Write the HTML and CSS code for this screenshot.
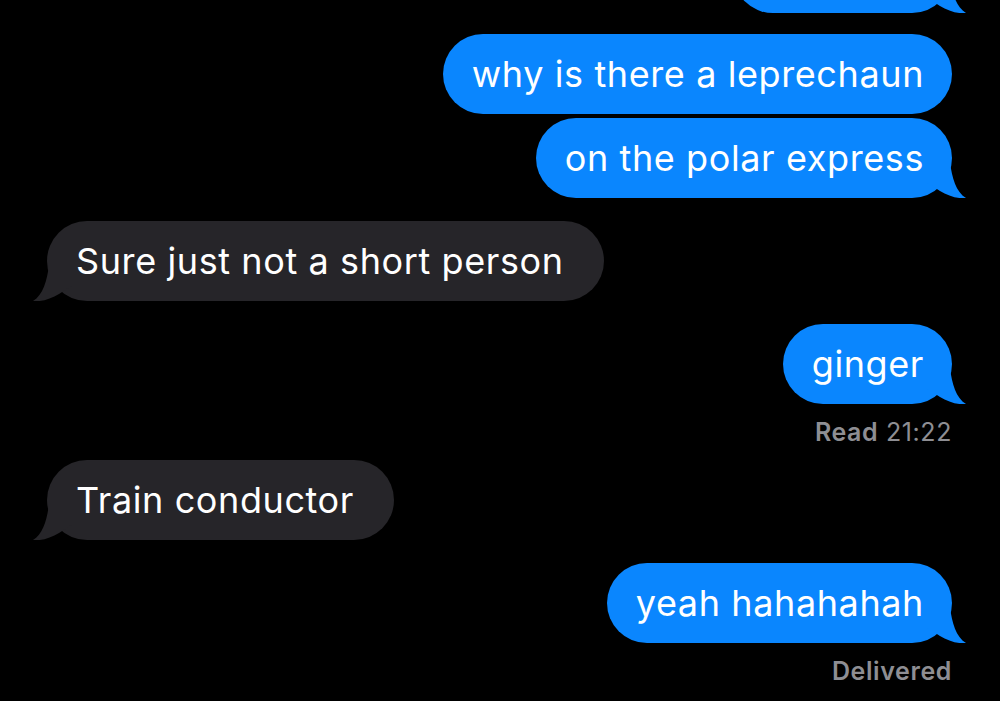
FILE: index.html
```html
<!DOCTYPE html>
<html lang="en">
<head>
    <meta charset="UTF-8">
    <meta name="viewport" content="width=device-width, initial-scale=1.0">
    <title>Messages</title>
    <link rel="stylesheet" href="styles.css">
</head>
<body>
    <main class="thread">
        <div class="group sent first">
            <div class="bubble tail clipped">
                <svg class="tail-shape" viewBox="0 0 40 36"><path d="M24 0 C26 16 30 30 40 36 C32 37 22 34 14 29 L0 20 L0 0 Z"/></svg>
            </div>
        </div>

        <div class="group sent">
            <div class="bubble">why is there a leprechaun</div>
            <div class="bubble tail">on the polar express
                <svg class="tail-shape" viewBox="0 0 40 36"><path d="M24 0 C26 16 30 30 40 36 C32 37 22 34 14 29 L0 20 L0 0 Z"/></svg>
            </div>
        </div>

        <div class="group received">
            <div class="bubble tail">Sure just not a short person
                <svg class="tail-shape" viewBox="0 0 40 36"><path d="M24 0 C26 16 30 30 40 36 C32 37 22 34 14 29 L0 20 L0 0 Z"/></svg>
            </div>
        </div>

        <div class="group sent with-status">
            <div class="bubble tail">ginger
                <svg class="tail-shape" viewBox="0 0 40 36"><path d="M24 0 C26 16 30 30 40 36 C32 37 22 34 14 29 L0 20 L0 0 Z"/></svg>
            </div>
            <div class="status"><b>Read</b> 21:22</div>
        </div>

        <div class="group received">
            <div class="bubble tail">Train conductor
                <svg class="tail-shape" viewBox="0 0 40 36"><path d="M24 0 C26 16 30 30 40 36 C32 37 22 34 14 29 L0 20 L0 0 Z"/></svg>
            </div>
        </div>

        <div class="group sent with-status">
            <div class="bubble tail">yeah hahahahah
                <svg class="tail-shape" viewBox="0 0 40 36"><path d="M24 0 C26 16 30 30 40 36 C32 37 22 34 14 29 L0 20 L0 0 Z"/></svg>
            </div>
            <div class="status"><b>Delivered</b></div>
        </div>
    </main>
</body>
</html>
```

FILE: styles.css
```css
* {
    margin: 0;
    padding: 0;
    box-sizing: border-box;
}

html, body {
    background: #000;
    height: 100%;
    overflow: hidden;
}

body {
    font-family: Inter, Roboto, 'Liberation Sans', sans-serif;
    color: #fff;
}

.thread {
    display: flex;
    flex-direction: column;
    padding: 0 48px 0 47px;
}

.group {
    display: flex;
    flex-direction: column;
    gap: 4px;
    margin-top: 23px;
}

.group.first {
    margin-top: -67px;
}

.group.first + .group {
    margin-top: 21px;
}

.group.with-status + .group {
    margin-top: 14px;
}

.sent {
    align-items: flex-end;
}

.received {
    align-items: flex-start;
}

.bubble {
    position: relative;
    height: 80px;
    line-height: 80px;
    border-radius: 40px;
    font-size: 36px;
    letter-spacing: 0.6px;
    white-space: nowrap;
    padding: 0 28px 0 29px;
}

.bubble.clipped {
    width: 219px;
}

.sent .bubble {
    background: #0a86fe;
}

.received .bubble {
    background: #262529;
    padding: 0 40px 0 29px;
}

.tail-shape {
    position: absolute;
    bottom: 0;
    width: 40px;
    height: 36px;
}

.sent .tail-shape {
    right: -14px;
    fill: #0a86fe;
}

.received .tail-shape {
    left: -14px;
    fill: #262529;
    transform: scaleX(-1);
}

.status {
    margin-top: 10px;
    font-size: 25px;
    line-height: 28px;
    letter-spacing: 0.6px;
    color: #8e8e93;
}

.status b {
    font-weight: 600;
}
```
